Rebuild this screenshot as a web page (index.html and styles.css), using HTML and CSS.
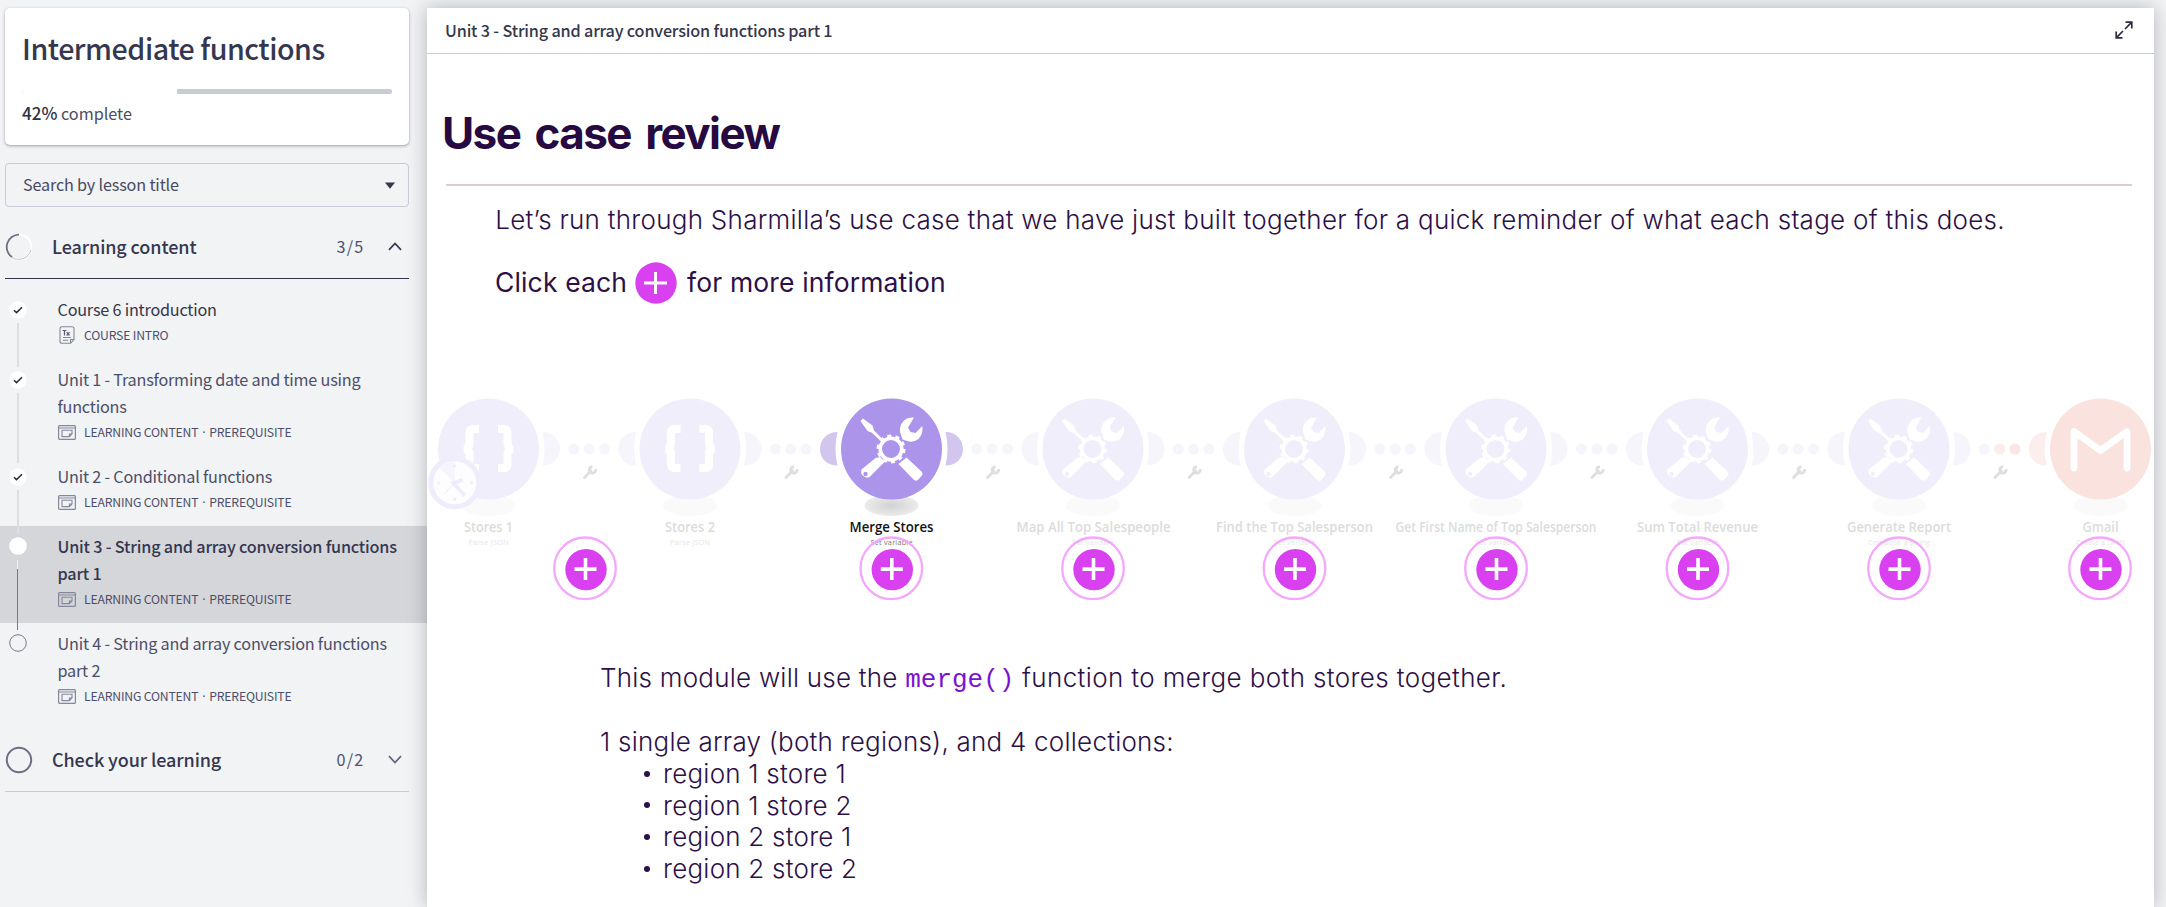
FILE: index.html
```html
<!DOCTYPE html>
<html lang="en">
<head>
<meta charset="utf-8">
<title>Intermediate functions</title>
<link rel="stylesheet" href="styles.css">
</head>
<body>
<svg class="defs" width="0" height="0">
  <defs>
    <symbol id="i-content" viewBox="0 0 18 15">
      <rect x=".6" y=".6" width="16.8" height="13.8" rx="1" fill="none" stroke="#85879a" stroke-width="1.2"/>
      <path d="M.6 3H17.4" stroke="#85879a" stroke-width="1"/>
      <path d="M4 5.2H14V9L11.4 11.6H4ZM14 9H11.4V11.6" fill="none" stroke="#85879a" stroke-width="1.1"/>
    </symbol>
    <symbol id="i-text" viewBox="0 0 16 18">
      <path d="M3 .7H13Q15 .7 15 2.700V13.500L11.500 17.300H3Q1 17.300 1 15.300V2.700Q1 .7 3 .7ZM15 13.500H11.500V17.300M4 11.500H12M4 14.200H9" fill="none" stroke="#85879a" stroke-width="1.1"/>
      <path d="M3.500 4.500H7.500M5.500 4.500V9.500M7.700 6.200L10.500 9.500M10.500 6.200L7.700 9.500" fill="none" stroke="#5a5c72" stroke-width="1.2"/>
    </symbol>
    <symbol id="check" viewBox="0 0 18 18">
      <circle cx="9" cy="9" r="8.700" fill="#fff"/>
      <path d="M5 9.200L7.500 11.600L13 6.200" fill="none" stroke="#2c2d38" stroke-width="1.500"/>
    </symbol>
    <g id="wrench"><path d="M-5.500 5.500L1-1" stroke="#dedede" stroke-width="2.800" stroke-linecap="round"/><path d="M5.500-2.800A3.200 3.200 0 1 1 2.500-5.200" fill="none" stroke="#dedede" stroke-width="2.800"/></g>
    <g id="braces" fill="none" stroke="#fff" stroke-width="8">
      <path d="M-9.500-20H-15Q-19-20-19-16V-6Q-19-1-24 0Q-19 1-19 5V15Q-19 19-15 19H-9.500"/>
      <path d="M9.500-20H15Q19-20 19-16V-6Q19-1 24 0Q19 1 19 5V15Q19 19 15 19H9.500"/>
    </g>
    <g id="tools" fill="#fff">
      <path d="M-31-28L-28.500-30.500L-19-23.500L-17.500-18.500L-9.500-10.500L-11.500-8.700L-20-16.500L-24-18Z"/>
      <path d="M22.500-31.500A12.600 12.600 0 0 0 8.500-17L11-9.500L15.500-8Q22-6 27-10Q32-15 30.800-23L24-16L19-17L16.500-21.500Z"/>
      <path d="M-11 8L-7 13L-22 28A6 6 0 0 1-30 20.500L-16 9Z"/>
      <path d="M7 15L15 8.500L30 22.500Q32 25 30 27L26.500 31Q24 32.500 22 30.500Z"/>
      <circle r="10.800" fill="none" stroke="#fff" stroke-width="3.600" cx="-.5" cy="0"/>
      <circle r="13" fill="none" stroke="#fff" stroke-width="3" stroke-dasharray="4 4.168" cx="-.5" cy="0"/>
    </g>
    <path id="ear" d="M54-17C65-17 71.500-9 71.500 0S65 16.500 54 16.500Q58 0 54-17Z"/>
    <g id="dots"><circle cx="85.300" r="5.500"/><circle cx="100.700" r="5.500"/><circle cx="116" r="5.500"/></g>
    <g id="plus">
      <circle r="30.800" fill="none" stroke="#f4a8fc" stroke-width="2.300"/>
      <circle cx="1" cy="1.300" r="20.700" fill="#d840f0"/>
      <path d="M-10.500.8H11.500M.5-10.200V11.800" stroke="#fff" stroke-width="3.600"/>
    </g>
    <radialGradient id="shade"><stop offset="0" stop-color="#d2d2d2"/><stop offset="1" stop-color="#ebebeb"/></radialGradient>
  </defs>
</svg>
<div class="app">
  <aside class="sidebar">
    <section class="course">
      <h1 class="course-title">Intermediate functions</h1>
      <div class="progress"><div class="progress-rest"></div></div>
      <p class="complete"><b>42%</b> complete</p>
    </section>
    <div class="search"><span class="search-text">Search by lesson title</span>
      <svg width="10" height="7" viewBox="0 0 10 7"><path d="M0 .5H10L5 6.700Z" fill="#35374f"/></svg>
    </div>
    <div class="group open">
      <svg width="28" height="28" viewBox="-14 -14 28 28"><circle r="12.300" fill="none" stroke="#fff" stroke-width="2"/><path d="M0-12.300A12.300 12.300 0 0 0-7 10.100" fill="none" stroke="#6c6e83" stroke-width="1.800"/><path d="M-7 10.400A12.700 12.700 0 0 0 12 3" fill="none" stroke="#a5a7b4" stroke-width=".7"/></svg>
      <h2 class="group-name">Learning content</h2><span class="count">3/5</span>
      <svg width="14" height="9" viewBox="0 0 14 9"><path d="M1 7.800L7 1.500L13 7.800" fill="none" stroke="#35374f" stroke-width="1.700"/></svg>
    </div>
    <ol class="lessons">
      <li class="lesson first"><div class="rail"><svg width="18" height="18"><use href="#check"/></svg><i class="line"></i></div>
        <div><h3 class="name">Course 6 introduction</h3><p class="meta"><svg width="18" height="18"><use href="#i-text"/></svg><span>COURSE INTRO</span></p></div></li>
      <li class="lesson"><div class="rail"><svg width="18" height="18"><use href="#check"/></svg><i class="line"></i></div>
        <div><h3 class="name">Unit 1 - Transforming date and time using<br>functions</h3><p class="meta"><svg width="18" height="15"><use href="#i-content"/></svg><span>LEARNING CONTENT <i class="dot">·</i> PREREQUISITE</span></p></div></li>
      <li class="lesson"><div class="rail"><svg width="18" height="18"><use href="#check"/></svg><i class="line"></i></div>
        <div><h3 class="name">Unit 2 - Conditional functions</h3><p class="meta"><svg width="18" height="15"><use href="#i-content"/></svg><span>LEARNING CONTENT <i class="dot">·</i> PREREQUISITE</span></p></div></li>
      <li class="lesson active"><div class="rail"><svg width="18" height="18"><circle cx="9" cy="9" r="8.800" fill="#fff"/></svg><i class="line dark"></i></div>
        <div><h3 class="name">Unit 3 - String and array conversion functions<br>part 1</h3><p class="meta"><svg width="18" height="15"><use href="#i-content"/></svg><span>LEARNING CONTENT <i class="dot">·</i> PREREQUISITE</span></p></div></li>
      <li class="lesson last"><div class="rail"><svg width="18" height="18"><circle cx="9" cy="9" r="8.300" fill="none" stroke="#77798c"/></svg></div>
        <div><h3 class="name">Unit 4 - String and array conversion functions<br>part 2</h3><p class="meta"><svg width="18" height="15"><use href="#i-content"/></svg><span>LEARNING CONTENT <i class="dot">·</i> PREREQUISITE</span></p></div></li>
    </ol>
    <div class="group closed">
      <svg width="28" height="28" viewBox="-14 -14 28 28"><circle r="12.200" fill="none" stroke="#6c6e83" stroke-width="2"/></svg>
      <h2 class="group-name">Check your learning</h2><span class="count">0/2</span>
      <svg width="14" height="9" viewBox="0 0 14 9"><path d="M1 1.200L7 7.500L13 1.200" fill="none" stroke="#60627a" stroke-width="1.700"/></svg>
    </div>
  </aside>
  <main class="player">
    <header class="bar"><span class="bar-title">Unit 3 - String and array conversion functions part 1</span>
      <svg width="18" height="18" viewBox="0 0 18 18"><path d="M10 8L16.300 1.700M10.500 1.200H16.800V7.500M8 10L1.700 16.300M1.200 10.500V16.800H7.500" fill="none" stroke="#2b2d42" stroke-width="1.700"/></svg>
    </header>
    <article class="slide">
      <h2 class="title">Use case review</h2>
      <p class="lead">Let’s run through Sharmilla’s use case that we have just built together for a quick reminder of what each stage of this does.</p>
      <p class="hint"><span class="click">Click each</span>
        <svg width="42" height="42" viewBox="-21 -21 42 42"><circle r="20.700" fill="#d840f0"/><path d="M-12 0H11M-.5-11V11" stroke="#fff" stroke-width="3"/></svg>
        <span class="more">for more information</span></p>
      <svg class="flow" width="1727" height="220" viewBox="427 390 1727 220">
        <g fill="#f6f5fc">
          <g transform="translate(488.500 449)"><use href="#ear"/><use href="#dots"/></g>
          <g transform="translate(690 449)"><use href="#ear"/><use href="#ear" transform="scale(-1 1)"/><use href="#dots"/></g>
          <g transform="translate(891.500 449)"><g fill="#d3c6ee"><use href="#ear"/><use href="#ear" transform="scale(-1 1)"/></g><use href="#dots"/></g>
          <g transform="translate(1093 449)"><use href="#ear"/><use href="#ear" transform="scale(-1 1)"/><use href="#dots"/></g>
          <g transform="translate(1294.500 449)"><use href="#ear"/><use href="#ear" transform="scale(-1 1)"/><use href="#dots"/></g>
          <g transform="translate(1496 449)"><use href="#ear"/><use href="#ear" transform="scale(-1 1)"/><use href="#dots"/></g>
          <g transform="translate(1697.500 449)"><use href="#ear"/><use href="#ear" transform="scale(-1 1)"/><use href="#dots"/></g>
          <g transform="translate(1899 449)"><use href="#ear"/><use href="#ear" transform="scale(-1 1)"/><circle cx="85.300" r="5.500"/><circle cx="100.700" r="5.500" fill="#fbedec"/><circle cx="116" r="5.500" fill="#fae6e4"/></g>
          <use href="#ear" transform="translate(2100.500 449) scale(-1 1)" fill="#fbeeec"/>
        </g>
        <use href="#wrench" x="590" y="472"/><use href="#wrench" x="791.500" y="472"/><use href="#wrench" x="993" y="472"/><use href="#wrench" x="1194.500" y="472"/><use href="#wrench" x="1396" y="472"/><use href="#wrench" x="1597.500" y="472"/><use href="#wrench" x="1799" y="472"/><use href="#wrench" x="2000.500" y="472"/>
        <g fill="#fafafa"><ellipse cx="488.500" cy="505.500" rx="27" ry="10.500"/><ellipse cx="690" cy="505.500" rx="27" ry="10.500"/><ellipse cx="891.500" cy="505.500" rx="27" ry="10.500" fill="url(#shade)"/><ellipse cx="1093" cy="505.500" rx="27" ry="10.500"/><ellipse cx="1294.500" cy="505.500" rx="27" ry="10.500"/><ellipse cx="1496" cy="505.500" rx="27" ry="10.500"/><ellipse cx="1697.500" cy="505.500" rx="27" ry="10.500"/><ellipse cx="1899" cy="505.500" rx="27" ry="10.500"/><ellipse cx="2100.500" cy="505.500" rx="27" ry="10.500"/></g>
        <g fill="#f1eefc"><circle cx="488.500" cy="449" r="50.500"/><circle cx="690" cy="449" r="50.500"/><circle cx="891.500" cy="449" r="50.500" fill="#ac94ea"/><circle cx="1093" cy="449" r="50.500"/><circle cx="1294.500" cy="449" r="50.500"/><circle cx="1496" cy="449" r="50.500"/><circle cx="1697.500" cy="449" r="50.500"/><circle cx="1899" cy="449" r="50.500"/><circle cx="2100.500" cy="449" r="50.500" fill="#fae3df"/></g>
        <use href="#braces" x="488.500" y="449"/><use href="#braces" x="690" y="449"/>
        <use href="#tools" x="891.500" y="449"/><use href="#tools" x="1093" y="449"/><use href="#tools" x="1294.500" y="449"/><use href="#tools" x="1496" y="449"/><use href="#tools" x="1697.500" y="449"/><use href="#tools" x="1899" y="449"/>
        <g><circle cx="865.500" cy="474" r="2.200" fill="#ac94ea"/><g fill="#f1eefc"><circle cx="1067" cy="474" r="2.200"/><circle cx="1268.500" cy="474" r="2.200"/><circle cx="1470" cy="474" r="2.200"/><circle cx="1671.500" cy="474" r="2.200"/><circle cx="1873" cy="474" r="2.200"/></g></g>
        <path d="M2074 468V431.500L2100.500 450.500L2127 431.500V468" fill="none" stroke="#fff" stroke-width="6.800" stroke-linecap="round" stroke-linejoin="round"/>
        <g transform="translate(454.700 482.700)" stroke="#f0ecfb">
          <circle r="24" fill="#fdfdff" stroke-width="5"/>
          <path d="M0 0V-21A21 21 0 0 0-15-15Z" fill="#f6f4fd" stroke="none"/>
          <path d="M8-3L-1 .5L10 13" fill="none" stroke-width="4"/><path d="M-1 1L-10 11" stroke-width="1"/>
          <path d="M0-18V-15.500M0 15V18M-17 0H-15M15.500 0H18" stroke-width="3"/>
        </g>
        <g class="labels">
          <text x="488.500" y="531.500" textLength="49" lengthAdjust="spacingAndGlyphs">Stores 1</text><text x="690" y="531.500" textLength="50" lengthAdjust="spacingAndGlyphs">Stores 2</text>
          <text class="on" x="891.500" y="531.500" textLength="84" lengthAdjust="spacingAndGlyphs">Merge Stores</text>
          <text x="1093.500" y="531.500" textLength="154" lengthAdjust="spacingAndGlyphs">Map All Top Salespeople</text><text x="1294.500" y="531.500" textLength="157" lengthAdjust="spacingAndGlyphs">Find the Top Salesperson</text>
          <text x="1496" y="531.500" textLength="201" lengthAdjust="spacingAndGlyphs">Get First Name of Top Salesperson</text><text x="1697.500" y="531.500" textLength="121" lengthAdjust="spacingAndGlyphs">Sum Total Revenue</text>
          <text x="1899" y="531.500" textLength="104" lengthAdjust="spacingAndGlyphs">Generate Report</text><text x="2100.500" y="531.500" textLength="36" lengthAdjust="spacingAndGlyphs">Gmail</text>
        </g>
        <g class="sub">
          <text x="488.500" y="545" textLength="40">Parse JSON</text><text x="690" y="545" textLength="40">Parse JSON</text><text class="on" x="891.500" y="545" textLength="42">Set variable</text>
          <text x="1093" y="545" textLength="42">Set variable</text><text x="1294.500" y="545" textLength="42">Set variable</text><text x="1496" y="545" textLength="42">Set variable</text><text x="1697.500" y="545" textLength="42">Set variable</text>
          <text x="1899" y="545" textLength="62">Compose a string</text><text x="2100.500" y="545" textLength="49">Create a Draft</text>
        </g>
        <use href="#plus" x="585" y="568.300"/><use href="#plus" x="891.300" y="568.300"/><use href="#plus" x="1093" y="568.300"/><use href="#plus" x="1294.500" y="568.300"/><use href="#plus" x="1496" y="568.300"/><use href="#plus" x="1697.500" y="568.300"/><use href="#plus" x="1899" y="568.300"/><use href="#plus" x="2100" y="568.300"/>
      </svg>
      <div class="body">
        <p>This module will use the <code>merge()</code> <span class="wide">function to merge both stores together.</span></p>
        <p class="b2">1 single array (both regions), and 4 collections:</p>
        <ul class="regions"><li>region 1 store 1</li><li>region 1 store 2</li><li>region 2 store 1</li><li>region 2 store 2</li></ul>
      </div>
    </article>
  </main>
</div>
</body>
</html>
```

FILE: styles.css
```css
* { box-sizing: border-box; margin: 0; padding: 0; }
body { background: #f1f3f5; font-family: "Noto Sans CJK SC", "Noto Sans", sans-serif; color: #35374f; overflow: hidden; height: 907px; }
.defs { display: block; height: 0; }
h1, h2, h3 { font-weight: 500; }
.app { display: flex; height: 907px; }
.sidebar { width: 427px; padding-top: 8px; flex: none; }
.course { margin: 0 18px 0 5px; height: 137px; background: #fff; border-radius: 5px; box-shadow: 0 1px 3px rgba(50,52,70,.45); padding: 18px 17px 0; }
.course-title { font-size: 28.6px; line-height: 44px; letter-spacing: -.46px; white-space: nowrap; }
.progress { margin-top: 19px; height: 5px; border-left: 1px dotted #e8e8ee; border-radius: 3px; }
.progress-rest { width: 215px; height: 5px; margin-left: auto; background: #c9ccd6; border-radius: 0 3px 3px 0; }
.complete { font-size: 16.2px; line-height: 24px; margin-top: 7px; color: #4a4c60; }
.complete b { font-weight: 500; color: #2e3044; font-size: 17px; }
.search { margin: 18px 18px 0 5px; height: 44px; border: 1px solid #c9ccd8; border-radius: 4px; display: flex; align-items: center; justify-content: space-between; padding: 0 13px 0 17px; font-size: 16.2px; letter-spacing: -.17px; color: #4a4c60; }
.search-text { line-height: 24px; padding-bottom: 3px; }
.group { margin: 0 18px 0 5px; display: flex; align-items: center; padding-right: 7px; }
.group.open { height: 72px; padding-top: 8px; border-bottom: 1px solid #35374f; }
.group.closed { height: 72px; padding-top: 8px; border-bottom: 1px solid #c9ccd6; }
.group-name { font-size: 18px; line-height: 26px; margin-left: 19px; padding-bottom: 1px; letter-spacing: -.1px; flex: 1; white-space: nowrap; }
.count { font-size: 16.2px; line-height: 24px; padding-bottom: 1px; letter-spacing: 1.2px; margin-right: 23.5px; color: #50526b; }
.lessons { list-style: none; padding-top: 10px; }
.lesson { display: flex; height: 97px; padding: 7px 0 0 8px; color: #4d4f68; }
.lesson:nth-child(1), .lesson:nth-child(3) { height: 70px; }
.lesson.active { background: #d5d6da; }
.rail { width: 49.5px; flex: none; padding-top: 4.500px; display: flex; flex-direction: column; align-items: flex-start; }
.active .rail, .last .rail { padding-top: 3.5px; }
.rail svg { flex: none; margin-left: .5px; }
.line { flex: none; margin: 4px 0 0 8.500px; width: 2px; background: #dddee2; height: 44px; }
.lesson:nth-child(2) .line { height: 70px; }
.line.dark { height: 70px; margin-top: 5px; background: linear-gradient(#f0f0f2 0 9px, #77798c 9px); width: 1px; margin-left: 9px; position: relative; }
.name { font-weight: 400; font-size: 16.2px; line-height: 27px; letter-spacing: -.2px; white-space: nowrap; }
.first .name { color: #35374a; }
.active .name { font-weight: 500; color: #35374f; letter-spacing: -.18px; }
.meta { display: flex; align-items: center; gap: 8.5px; font-size: 12.200px; letter-spacing: -.17px; height: 24px; white-space: nowrap; }
.dot { font-family: "Noto Sans", sans-serif; font-style: normal; line-height: 1; margin: 0 1.3px; }
.player { width: 1727px; margin-top: 8px; background: #fff; box-shadow: 0 0 18px rgba(20,22,30,.28); position: relative; }
.bar { height: 46px; border-bottom: 1px solid #c9ccd8; display: flex; align-items: center; justify-content: space-between; padding: 0 21px 2px 18px; font-size: 16.2px; letter-spacing: -.17px; font-weight: 500; color: #35374a; }
.slide { color: #2c1046; font-family: Inter, "Open Sans", sans-serif; font-weight: 300; }
.title { font-size: 44px; line-height: 54px; font-weight: 700; letter-spacing: -1.6px; word-spacing: 5.5px; text-indent: -4px; margin: 0 22px 0 19px; padding: 52px 0 24px; color: #270a41; white-space: nowrap; border-bottom: 2px solid #d6cfd4; }
.lead { font-size: 26px; line-height: 36px; letter-spacing: .265px; margin: 16px 0 0 68.300px; white-space: nowrap; }
.hint { display: flex; align-items: center; margin: 24px 0 0 68px; font-size: 26.5px; letter-spacing: .14px; font-weight: 400; height: 42px; white-space: nowrap; }
.click, .more { padding-bottom: 2px; }
.click { width: 140px; }
.more { margin-left: 10px; }
.flow { display: block; margin-top: 86px; }
.labels { font: 600 14.500px "Open Sans", "Noto Sans", sans-serif; fill: #dcdcdc; text-anchor: middle; }
.labels .on { fill: #111; }
.sub { font: 400 7.200px "Open Sans", sans-serif; fill: #e6e6e6; text-anchor: middle; }
.sub .on { fill: #777; }
.body { margin: 51.5px 0 0 173px; font-size: 26px; letter-spacing: .23px; line-height: 31.700px; white-space: nowrap; }
.body code { font-family: "Liberation Mono", monospace; font-size: 26px; font-weight: 400; letter-spacing: 0; line-height: 20px; color: #7a12cf; }
.wide { letter-spacing: .38px; }
.b2 { margin-top: 33px; }
.regions { list-style: none; }
.regions li { display: flex; align-items: center; padding-left: 44px; }
.regions li::before { content: ""; width: 6px; height: 6px; border-radius: 50%; background: #2c1046; margin-right: 13px; }
```
